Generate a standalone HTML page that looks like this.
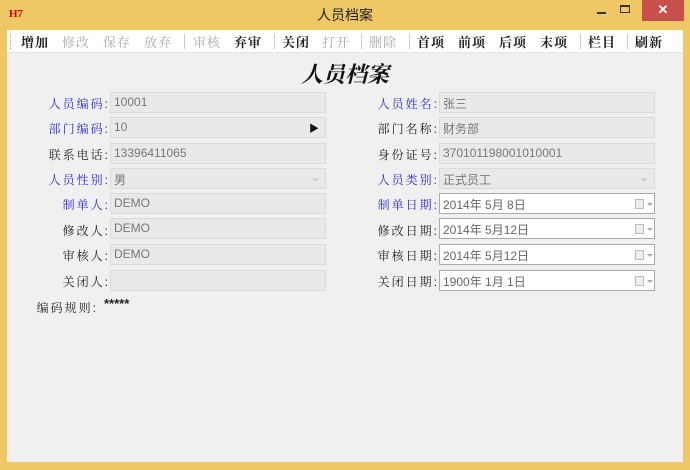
<!DOCTYPE html>
<html><head><meta charset="utf-8"><style>
*{margin:0;padding:0;box-sizing:border-box}
body{width:690px;height:470px;background:#f0c765;position:relative;overflow:hidden;font-family:"Liberation Sans","Noto Serif CJK SC","Noto Sans CJK SC",serif;font-size:12px}
.title{position:absolute;top:5px;left:0;width:690px;text-align:center;font-family:"Liberation Sans","Noto Sans CJK SC",sans-serif;font-size:14px;color:#222}
.logo{position:absolute;left:9px;top:8px;font:bold 11px "Liberation Serif",serif;color:#c00}
.close{position:absolute;left:642px;top:0;width:42px;height:21px;background:#c7504a;color:#fff;text-align:center;font:bold 13px "Liberation Sans",sans-serif;line-height:20px}
.min{position:absolute;left:597px;top:12px;width:9px;height:2px;background:#333}
.max{position:absolute;left:620px;top:5px;width:10px;height:8px;border:1px solid #333;border-top-width:2px}
.client{position:absolute;left:7px;top:30px;width:676px;height:432px;background:#f0f0f0}
.tb{position:absolute;left:0;top:0;width:676px;height:23px;background:#fff;border-bottom:1px solid #e4e4e4}
.tb span{position:absolute;top:2px;font-size:13px;font-weight:bold;color:#222;letter-spacing:1px}
.tb span.d{color:#aaa;font-weight:normal}
.tb i{position:absolute;top:4px;width:1px;height:15px;background:#ccc}
.h{position:absolute;left:0;width:676px;top:28px;text-align:center;font-size:22px;font-style:italic;font-weight:bold;color:#111}
.l{position:absolute;font-size:12px;color:#222;text-align:right;width:102px;letter-spacing:2px}
.b{color:#2a2ad0}
.f{position:absolute;height:21px;border:1px solid #dadada;background:#e9e9e9;color:#777;font-size:12px;padding:2px 3px;font-family:"Liberation Sans","Noto Sans CJK SC",sans-serif}
.w{background:#fff;border-color:#aaa;color:#666}
.cal{position:absolute;right:10px;top:5px;width:9px;height:10px;border:1px solid #bbb;background:#eee}
.cal:after{content:"";position:absolute;left:11px;top:3px;border:3px solid transparent;border-top-color:#aaa}
</style></head><body>
<div class="logo">H7</div>
<div class="title">人员档案</div>
<div class="min"></div><div class="max"></div><div class="close">✕</div>
<div class="client">
<div class="tb">
<i style="left:3px;width:1px;background:none;border-left:1px dotted #999"></i>
<span style="left:14px">增加</span><span class="d" style="left:55px">修改</span><span class="d" style="left:96px">保存</span><span class="d" style="left:137px">放弃</span><i style="left:177px"></i><span class="d" style="left:186px">审核</span><span style="left:227px">弃审</span><i style="left:267px"></i><span style="left:275px">关闭</span><span class="d" style="left:315px">打开</span><i style="left:354px"></i><span class="d" style="left:362px">删除</span><i style="left:402px"></i><span style="left:410px">首项</span><span style="left:451px">前项</span><span style="left:492px">后项</span><span style="left:533px">末项</span><i style="left:573px"></i><span style="left:581px">栏目</span><i style="left:620px"></i><span style="left:628px">刷新</span>
</div>
<div class="h">人员档案</div>
</div>
<div class="l b" style="left:8px;top:95px">人员编码:</div><div class="f" style="left:110px;top:92px;width:216px">10001</div>
<div class="l b" style="left:8px;top:120px">部门编码:</div><div class="f" style="left:110px;top:117px;width:216px">10<span style="position:absolute;right:6px;top:2px;color:#111;font-size:10px">▶</span></div>
<div class="l" style="left:8px;top:146px">联系电话:</div><div class="f" style="left:110px;top:143px;width:216px">13396411065</div>
<div class="l b" style="left:8px;top:171px">人员性别:</div><div class="f" style="left:110px;top:168px;width:216px">男<span style="position:absolute;right:5px;top:1px;color:#bbb">⌄</span></div>
<div class="l b" style="left:8px;top:196px">制单人:</div><div class="f" style="left:110px;top:193px;width:216px">DEMO</div>
<div class="l" style="left:8px;top:222px">修改人:</div><div class="f" style="left:110px;top:218px;width:216px">DEMO</div>
<div class="l" style="left:8px;top:247px">审核人:</div><div class="f" style="left:110px;top:244px;width:216px">DEMO</div>
<div class="l" style="left:8px;top:273px">关闭人:</div><div class="f" style="left:110px;top:270px;width:216px"></div>
<div class="l" style="left:-4px;top:299px">编码规则:</div><div style="position:absolute;left:104px;top:296px;font-weight:bold;font-size:13px;color:#222">*****</div>
<div class="l b" style="left:337px;top:95px">人员姓名:</div><div class="f" style="left:439px;top:92px;width:216px">张三</div>
<div class="l" style="left:337px;top:120px">部门名称:</div><div class="f" style="left:439px;top:117px;width:216px">财务部</div>
<div class="l" style="left:337px;top:146px">身份证号:</div><div class="f" style="left:439px;top:143px;width:216px">370101198001010001</div>
<div class="l b" style="left:337px;top:171px">人员类别:</div><div class="f" style="left:439px;top:168px;width:216px">正式员工<span style="position:absolute;right:5px;top:1px;color:#bbb">⌄</span></div>
<div class="l b" style="left:337px;top:196px">制单日期:</div><div class="f w" style="left:439px;top:193px;width:216px">2014年 5月 8日<div class="cal"></div></div>
<div class="l" style="left:337px;top:222px">修改日期:</div><div class="f w" style="left:439px;top:218px;width:216px">2014年 5月12日<div class="cal"></div></div>
<div class="l" style="left:337px;top:247px">审核日期:</div><div class="f w" style="left:439px;top:244px;width:216px">2014年 5月12日<div class="cal"></div></div>
<div class="l" style="left:337px;top:273px">关闭日期:</div><div class="f w" style="left:439px;top:270px;width:216px">1900年 1月 1日<div class="cal"></div></div>
</body></html>
